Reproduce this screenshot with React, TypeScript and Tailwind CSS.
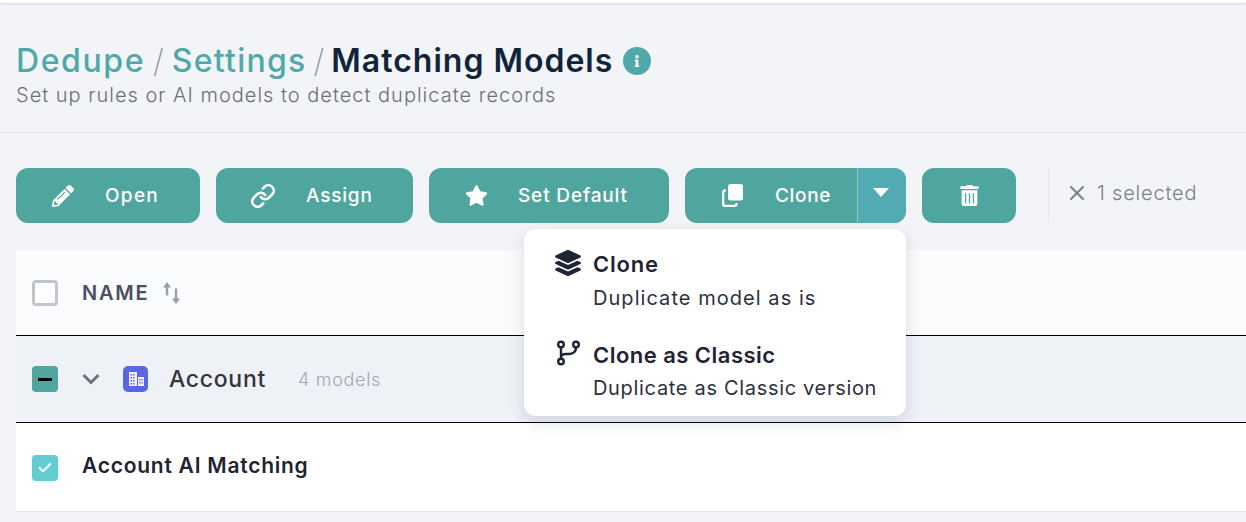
import React from "react";
import { FaPencilAlt, FaStar, FaTrashAlt, FaLayerGroup, FaInfo } from "react-icons/fa";
import { Check, Link, X } from "lucide-react";

function Btn({ icon, label, w, pl, gap, tracking }: { icon: React.ReactNode; label: string; w: string; pl: string; gap: string; tracking: string }) {
  return (
    <button className={`${w} ${pl} ${gap} h-[55px] flex items-center rounded-xl bg-[#4fa69e] text-white text-[19px] font-medium ${tracking}`}>
      {icon}
      <span className="pt-[2px]">{label}</span>
    </button>
  );
}

function SortIcon() {
  return (
    <svg width="18" height="22" viewBox="0 0 18 22">
      <path d="M4 13.5V4" stroke="#9a9ea6" strokeWidth="2.4" fill="none" />
      <path d="M0 5.5 4 0l4 5.5z" fill="#9a9ea6" />
      <path d="M13 6.5V18" stroke="#9a9ea6" strokeWidth="2.4" fill="none" />
      <path d="M9 16.5 13 22l4-5.5z" fill="#9a9ea6" />
    </svg>
  );
}

function BuildingIcon() {
  return (
    <svg width="16" height="14" viewBox="0 0 16 14" fill="#fff">
      <path fillRule="evenodd" d="M1 0h8v14H1zM2.5 2v1.5H4V2zm2.5 0v1.5h1.5V2zM2.5 5v1.5H4V5zM5 5v1.5h1.5V5zM2.5 8v1.5H4V8zM5 8v1.5h1.5V8zM2.5 11v1.5H4V11zM5 11v1.5h1.5V11z" opacity=".9" />
      <path fillRule="evenodd" d="M10 5h6v9h-6zm1.2 2v1.5h1.3V7zm2.2 0v1.5h1.3V7zm-2.2 3v1.5h1.3V10zm2.2 0v1.5h1.3V10z" opacity=".9" />
    </svg>
  );
}

function CloneIcon() {
  return (
    <svg width="21" height="23" viewBox="0 0 21 23" fill="none">
      <rect x="6" y="0" width="15" height="16.5" rx="2.5" fill="#fff" />
      <path d="M4 6.5H3A2 2 0 0 0 1.2 8.5v11.5A2 2 0 0 0 3 22h9.5a2 2 0 0 0 2-2v-1" stroke="#fff" strokeWidth="2.4" />
    </svg>
  );
}

function BranchIcon() {
  return (
    <svg width="26" height="26" viewBox="0 0 26 26" fill="none" stroke="#1f2433" strokeWidth="2.4">
      <circle cx="6" cy="4.5" r="2.8" />
      <circle cx="21" cy="4.5" r="2.8" />
      <circle cx="6" cy="21.5" r="2.8" />
      <path d="M6 7.5v11M21 7.5c0 5-4 6.5-7 6.5H11c-3 0-5 1-5 3.5" />
    </svg>
  );
}

export default function App() {
  return (
    <div className="relative w-[1246px] h-[522px] overflow-hidden bg-[#f3f4f8] text-[#1f2433]" style={{ fontFamily: "Inter, 'Liberation Sans', sans-serif" }}>
      <div className="h-[3px] bg-white shadow-[0_1px_3px_rgba(0,0,0,0.12)]" />
      <header className="h-[130px] border-b border-[#e2e4ee] pl-4 pt-[39px]">
        <div className="flex items-center h-[38px] text-[32px] leading-[38px]">
          <span className="text-[#4fa9a9] font-medium tracking-[1.6px]">Dedupe</span>
          <span className="text-[#8f939e] font-extralight mx-[8px]">/</span>
          <span className="text-[#4fa9a9] font-medium tracking-[1.25px]">Settings</span>
          <span className="text-[#8f939e] font-extralight mx-[7px]">/</span>
          <span className="text-[#12243a] font-semibold tracking-[1px]">Matching Models</span>
          <span className="ml-[10px] w-[28px] h-[28px] rounded-full bg-[#4fa9a9] flex items-center justify-center">
            <FaInfo className="text-white text-[12px]" />
          </span>
        </div>
        <p className="text-[20px] leading-[24px] font-light text-[#6b6f7a] mt-[3px] tracking-[1px]">Set up rules or AI models to detect duplicate records</p>
      </header>
      <section className="flex items-start pl-4 pt-[35px] gap-4 h-[117px]">
        <Btn icon={<FaPencilAlt className="text-[22px]" />} label="Open" w="w-[184px]" pl="pl-[36px]" gap="gap-[31px]" tracking="tracking-[1.3px]" />
        <Btn icon={<Link className="w-[26px] h-[26px]" strokeWidth={2.4} />} label="Assign" w="w-[197px]" pl="pl-[34px]" gap="gap-[30px]" tracking="tracking-[0.8px]" />
        <Btn icon={<FaStar className="text-[23px]" />} label="Set Default" w="w-[240px]" pl="pl-[36px]" gap="gap-[30px]" tracking="tracking-[0.85px]" />
        <div className="w-[221px] h-[55px] flex rounded-xl overflow-hidden bg-[#4fa69e] text-white text-[19px] font-medium tracking-[0.65px]">
          <div className="w-[173px] flex items-center pl-[37px] gap-[32px] border-r border-[#8cc7c4]">
            <CloneIcon />
            <span className="pt-[2px]">Clone</span>
          </div>
          <div className="flex-1 bg-[#52abb2] flex justify-center pt-[20px] pr-[2px]">
            <svg width="16" height="9" viewBox="0 0 16 9" fill="#fff"><path d="M0 0h16L8 9z" /></svg>
          </div>
        </div>
        <button className="w-[94px] h-[55px] flex items-center justify-center rounded-xl bg-[#4fa69e] text-white">
          <FaTrashAlt className="text-[21px]" />
        </button>
        <div className="ml-4 pl-[16px] h-[55px] border-l border-[#e6e8ef] flex items-center text-[#7b7f8c] text-[20px] font-light pb-[6px] tracking-[0.8px]">
          <X className="w-6 h-6 mr-[8px]" strokeWidth={2} />
          <span>1 selected</span>
        </div>
      </section>
      <section className="ml-4 bg-white">
        <div className="h-[86px] bg-[#fafbfd] border-b border-black flex items-center pl-4">
          <span className="w-[26px] h-[26px] rounded-[4px] border-[3px] border-[#c2c6cc] bg-white" />
          <span className="ml-[24px] text-[#4b5064] text-[20px] font-semibold tracking-[1.8px] mt-[1px]">NAME</span>
          <span className="ml-[13px]"><SortIcon /></span>
        </div>
        <div className="h-[87px] bg-[#eef1f6] border-b border-black flex items-center pl-4">
          <span className="w-[26px] h-[26px] rounded-[4px] bg-[#4fa69e] flex items-center justify-center">
            <span className="w-[14px] h-[3px] bg-black" />
          </span>
          <svg className="ml-[24px]" width="18" height="12" viewBox="0 0 18 12" fill="none" stroke="#6e7177" strokeWidth="3"><path d="M1.5 2 9 9.5 16.5 2" /></svg>
          <span className="ml-[23px] w-[25px] h-[26px] rounded-[5px] bg-[#5a67e0] flex items-center justify-center"><BuildingIcon /></span>
          <span className="ml-[21px] text-[#33353b] text-[23px] font-medium tracking-[0.7px]">Account</span>
          <span className="ml-[32px] text-[#a4a7b1] text-[18px] font-light tracking-[0.7px]">4 models</span>
        </div>
        <div className="h-[89px] border-b border-[#e2e4ea] flex items-center pl-4">
          <span className="w-[26px] h-[26px] mt-[1px] rounded-[4px] bg-[#62cdd1] flex items-center justify-center">
            <Check className="w-[16px] h-[16px] text-white" strokeWidth={3} />
          </span>
          <span className="ml-[24px] mb-[3px] text-[#1f2433] text-[21px] font-semibold tracking-[0.75px]">Account AI Matching</span>
        </div>
      </section>
      <div className="absolute left-[524px] top-[229px] w-[382px] h-[187px] rounded-xl bg-white shadow-[0_6px_16px_rgba(30,40,70,0.14)]">
        <div className="absolute left-[31px] top-[20px] flex flex-col">
          <div className="flex items-start">
            <FaLayerGroup className="text-[26px] text-[#1f2433] mr-[12px] mt-[1px]" />
            <div>
              <div className="text-[22px] leading-[30px] font-semibold tracking-[0.8px]">Clone</div>
              <div className="text-[20px] leading-[26px] text-[#2c3040] mt-[6px] tracking-[1.05px]">Duplicate model as is</div>
            </div>
          </div>
          <div className="flex items-start mt-[29px]">
            <BranchIcon />
            <div className="ml-[12px]">
              <div className="text-[22px] leading-[30px] font-semibold tracking-[0.47px]">Clone as Classic</div>
              <div className="text-[20px] leading-[26px] text-[#2c3040] mt-[5px] tracking-[0.68px]">Duplicate as Classic version</div>
            </div>
          </div>
        </div>
      </div>
    </div>
  );
}
